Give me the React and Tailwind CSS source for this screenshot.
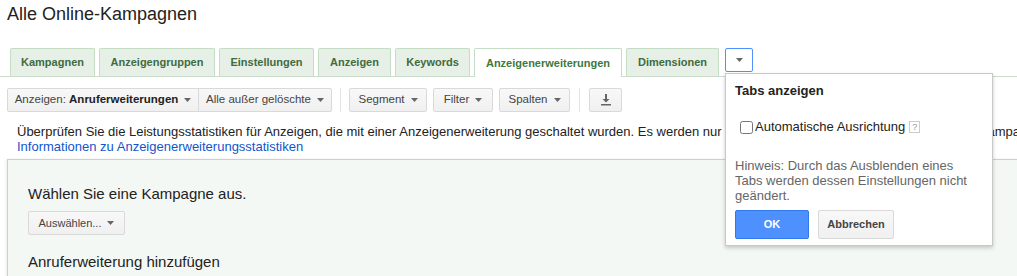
import { useState } from "react";

const tabs = [
  { label: "Kampagnen", w: "w-[85px]" },
  { label: "Anzeigengruppen", w: "w-[116px]" },
  { label: "Einstellungen", w: "w-[95px]" },
  { label: "Anzeigen", w: "w-[73px]" },
  { label: "Keywords", w: "w-[75px]" },
  { label: "Anzeigenerweiterungen", w: "w-[148px]" },
  { label: "Dimensionen", w: "w-[93px]" },
];

function Caret({ className = "" }) {
  return (
    <svg width="7" height="4" viewBox="0 0 7 4" className={className}>
      <path d="M0 0h7L3.5 4z" fill="#666" />
    </svg>
  );
}

function ToolButton({ children, className = "" }) {
  return (
    <button className={`h-[24px] flex items-center justify-center gap-[6px] border border-[#d9d9d9] bg-gradient-to-b from-[#f8f8f8] to-[#f0f0f0] text-[11.5px] text-[#444] rounded-[2px] ${className}`}>
      {children}
    </button>
  );
}

export default function App() {
  const [active] = useState("Anzeigenerweiterungen");
  const [auto, setAuto] = useState(false);

  return (
    <div className="relative w-[1017px] h-[276px] overflow-hidden bg-white font-['Liberation_Sans',Arial,sans-serif] text-[#222]">
      <h1 className="pl-[7px] pt-[3px] text-[18px] leading-[22px] text-[#222]">Alle Online-Kampagnen</h1>

      <div className="mt-[23px] flex items-end gap-[4px] pl-[10px] h-[29px] border-b border-[#cbdccb]">
        {tabs.map((t) =>
          t.label === active ? (
            <div key={t.label} className={`${t.w} h-[29px] -mb-px flex items-center justify-center bg-white border border-b-0 border-[#c5dcc5] text-[11px] font-bold text-[#3c7a3c] rounded-t-[2px]`}>
              {t.label}
            </div>
          ) : (
            <div key={t.label} className={`${t.w} h-[28px] flex items-center justify-center bg-[#e7f0e7] border border-b-0 border-[#c5dcc5] text-[11px] font-bold text-[#3f6b3f] rounded-t-[2px]`}>
              {t.label}
            </div>
          )
        )}
        <div className="ml-[2px] mb-[4px] w-[28px] h-[24px] flex items-center justify-center border border-[#4d90fe] bg-white rounded-[2px]">
          <Caret />
        </div>
      </div>

      <div className="mt-[11px] flex items-center pl-[7px]">
        <ToolButton className="w-[192px] rounded-r-none">
          <span>
            Anzeigen: <b className="text-[#222]">Anruferweiterungen</b>
          </span>
          <Caret />
        </ToolButton>
        <ToolButton className="w-[134px] -ml-px rounded-l-none">
          Alle außer gelöschte <Caret />
        </ToolButton>
        <div className="ml-[8px] mr-[8px] w-px h-[24px] bg-[#e5e5e5]" />
        <ToolButton className="w-[78px]">Segment <Caret /></ToolButton>
        <ToolButton className="w-[60px] ml-[6px]">Filter <Caret /></ToolButton>
        <ToolButton className="w-[71px] ml-[6px]">Spalten <Caret /></ToolButton>
        <div className="ml-[9px] mr-[9px] w-px h-[24px] bg-[#e5e5e5]" />
        <ToolButton className="w-[33px]">
          <svg width="10" height="12" viewBox="0 0 10 12">
            <path d="M4 0h2v5h2.5L5 8.5 1.5 5H4z" fill="#666" />
            <rect x="0" y="10" width="10" height="1.5" fill="#666" />
          </svg>
        </ToolButton>
      </div>

      <div className="mt-[12px] pl-[17px] text-[13px] leading-[15px] whitespace-nowrap">
        <p>
          Überprüfen Sie die Leistungsstatistiken für Anzeigen, die mit einer Anzeigenerweiterung geschaltet wurden. Es werden nur Statistiken aus allen Anzeigengruppen oder Kampagnen angezeigt.
        </p>
        <a className="text-[#1155cc]">Informationen zu Anzeigenerweiterungsstatistiken</a>
      </div>

      <div className="mt-[5px] ml-[7px] h-[200px] bg-[#f4f8f4] border-t border-l border-[#c9d2c9] shadow-[0_1px_3px_rgba(0,0,0,0.15)] pl-[20px] pt-[25px]">
        <div className="text-[15px] leading-[18px] text-[#222]">Wählen Sie eine Kampagne aus.</div>
        <button className="mt-[8px] w-[97px] h-[24px] flex items-center justify-center gap-[6px] border border-[#d9d9d9] bg-gradient-to-b from-[#f8f8f8] to-[#f0f0f0] text-[11px] text-[#444] rounded-[2px]">
          Auswählen... <Caret />
        </button>
        <div className="mt-[18px] text-[15px] leading-[18px] text-[#222]">Anruferweiterung hinzufügen</div>
      </div>

      <div className="absolute left-[725px] top-[73px] w-[268px] h-[173px] bg-white border border-[#c8c8c8] shadow-[0_2px_4px_rgba(0,0,0,0.2)] px-[9px] pt-[9px]">
        <div className="text-[13px] font-bold leading-[16px] text-[#222]">Tabs anzeigen</div>
        <label className="mt-[20px] ml-[5px] flex items-center text-[13px] text-[#222] leading-[16px]">
          <input
            type="checkbox"
            checked={auto}
            onChange={(e) => setAuto(e.target.checked)}
            className="w-[13px] h-[13px] m-0 mr-[2px]"
          />
          Automatische Ausrichtung
          <span className="ml-[4px] w-[11px] h-[12px] flex items-center justify-center border border-[#ccc] text-[9px] text-[#999] leading-none">?</span>
        </label>
        <p className="mt-[23px] w-[245px] text-[13px] leading-[15px] text-[#666]">
          Hinweis: Durch das Ausblenden eines Tabs werden dessen Einstellungen nicht geändert.
        </p>
        <div className="mt-[7px] flex gap-[9px]">
          <button className="w-[74px] h-[29px] bg-[#4d90fe] border border-[#3079ed] text-white text-[11px] font-bold rounded-[2px]">OK</button>
          <button className="w-[76px] h-[29px] bg-gradient-to-b from-[#f8f8f8] to-[#f0f0f0] border border-[#d9d9d9] text-[#444] text-[11px] font-bold rounded-[2px]">Abbrechen</button>
        </div>
      </div>
    </div>
  );
}
